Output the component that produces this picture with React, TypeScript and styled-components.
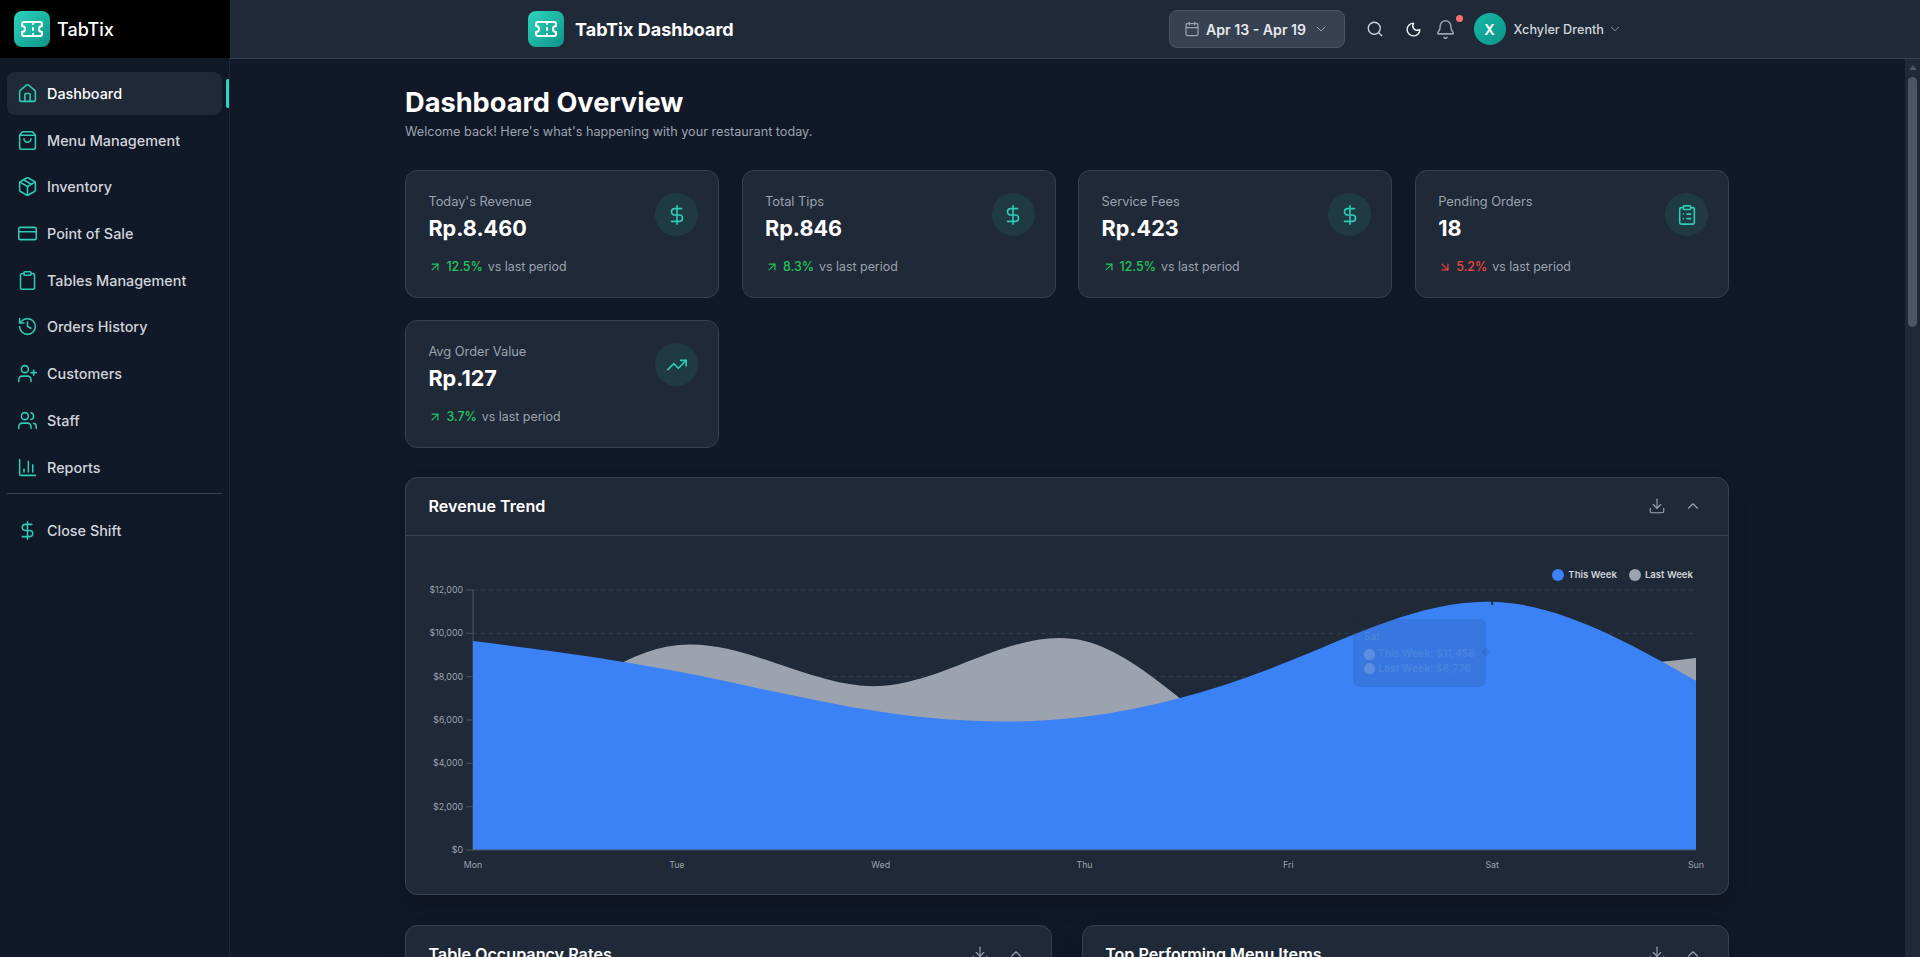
import styled, { createGlobalStyle } from "styled-components"
import {
    ArrowDownRight, ArrowUpRight, Bell, Calendar, ChartColumn, ChevronDown, ChevronUp, Clipboard,
    ClipboardList, CreditCard, DollarSign, Download, History, House, Moon, Package, Search,
    ShoppingBag, Ticket, TrendingUp, UserPlus, Users,
} from "lucide-react"

const GlobalStyle = createGlobalStyle`
    html, body, #root {
        margin: 0;
        height: 100%;
        overflow: hidden;
    }
    body {
        font-family: Inter, "Noto Sans", sans-serif;
        background: #111827;
    }
    * {
        box-sizing: border-box;
    }
`

const Shell = styled.div`
    display: flex;
    height: 100vh;
`
const Sidebar = styled.aside`
    width: 230px;
    flex-shrink: 0;
    display: flex;
    flex-direction: column;
    background: #111827;
    border-right: 1px solid #1f2937;
`
const SideBrand = styled.div`
    height: 58px;
    display: flex;
    align-items: center;
    gap: 7px;
    padding-left: 14px;
    background: #000;
    margin-right: -1px;
`
const LogoBox = styled.div`
    width: 36px;
    height: 36px;
    border-radius: 8px;
    display: flex;
    align-items: center;
    justify-content: center;
    color: #fff;
    background: linear-gradient(135deg, #2dd4bf, #0d9488);
`
const SideBrandName = styled.span`
    font-size: 18px;
    font-weight: 500;
    color: #fff;
`
const Nav = styled.nav`
    display: flex;
    flex-direction: column;
    gap: 3.7px;
    padding: 14px 7px 0;
`
const NavItem = styled.a<{ $active?: boolean }>`
    position: relative;
    height: 43px;
    display: flex;
    align-items: center;
    gap: 9.5px;
    padding-left: 9.5px;
    border-radius: 8px;
    font-size: 14.4px;
    font-weight: 500;
    color: ${(p) => (p.$active ? "#fff" : "#d1d5db")};
    background: ${(p) => (p.$active ? "#1f2937" : "transparent")};
    svg {
        color: #2cccb6;
        flex-shrink: 0;
    }
`
const ActiveMark = styled.span`
    position: absolute;
    right: -7px;
    top: 7px;
    width: 3px;
    height: 29px;
    border-radius: 2px 0 0 2px;
    background: #2dd4bf;
`
const NavDivider = styled.hr`
    width: 100%;
    margin: 1px 0 11px;
    border: 0;
    border-top: 1px solid #374151;
`
const Column = styled.div`
    flex: 1;
    min-width: 0;
    display: flex;
    flex-direction: column;
`
const Header = styled.header`
    height: 59px;
    flex-shrink: 0;
    display: flex;
    align-items: center;
    justify-content: space-between;
    padding: 0 298px;
    background: #1f2937;
    border-bottom: 1px solid #374151;
`
const HeaderBrand = styled.div`
    display: flex;
    align-items: center;
    gap: 11px;
`
const HeaderTitle = styled.h1`
    margin: 0;
    font-size: 18px;
    font-weight: 700;
    color: #fff;
`
const HeaderTools = styled.div`
    display: flex;
    align-items: center;
`
const DateButton = styled.button`
    width: 176px;
    height: 38px;
    display: flex;
    align-items: center;
    gap: 6px;
    padding: 0 0 0 14px;
    font-family: inherit;
    font-size: 14.1px;
    font-weight: 600;
    color: #e5e7eb;
    background: #374151;
    border: 1px solid #4b5563;
    border-radius: 8px;
    svg {
        color: #9ca3af;
    }
    span {
        margin-right: 1px;
    }
`
const IconButton = styled.span<{ $left: number; $color: string }>`
    position: relative;
    display: flex;
    margin-left: ${(p) => p.$left}px;
    color: ${(p) => p.$color};
`
const BellDot = styled.span`
    position: absolute;
    top: -4px;
    right: -7px;
    width: 7px;
    height: 7px;
    border-radius: 50%;
    background: #f87171;
`
const Avatar = styled.div`
    width: 32px;
    height: 32px;
    margin-left: 18px;
    border-radius: 50%;
    display: flex;
    align-items: center;
    justify-content: center;
    font-size: 14.4px;
    font-weight: 600;
    color: #fff;
    background: linear-gradient(135deg, #14b8a6, #0d9488);
`
const UserName = styled.span`
    margin: 0 4px 0 8px;
    font-size: 12.7px;
    font-weight: 500;
    color: #d1d5db;
    white-space: nowrap;
`
const Body = styled.div`
    flex: 1;
    min-height: 0;
    display: flex;
`
const Main = styled.main`
    flex: 1;
    min-width: 0;
    overflow: hidden;
    background: #111827;
`
const ScrollRail = styled.div`
    width: 15px;
    flex-shrink: 0;
    display: flex;
    flex-direction: column;
    align-items: center;
    padding-top: 6px;
    background: #1f2937;
`
const ScrollArrow = styled.span`
    width: 0;
    height: 0;
    border-left: 4.5px solid transparent;
    border-right: 4.5px solid transparent;
    border-bottom: 5px solid #4b5563;
`
const ScrollThumb = styled.span`
    width: 9px;
    height: 250px;
    margin-top: 7px;
    border-radius: 5px;
    background: #4b5563;
`
const Content = styled.div`
    padding: 27px 176px 0 175px;
`
const PageTitle = styled.h2`
    margin: 0;
    font-size: 27.2px;
    line-height: 34px;
    font-weight: 700;
    color: #fff;
`
const PageSub = styled.p`
    margin: 2px 0 0;
    font-size: 12.65px;
    line-height: 20px;
    color: #9ca3af;
`
const StatGrid = styled.section`
    display: grid;
    grid-template-columns: repeat(4, 1fr);
    gap: 22.4px;
    margin-top: 28px;
`
const StatCard = styled.article`
    height: 127.6px;
    padding: 22.4px;
    display: flex;
    justify-content: space-between;
    background: #1f2937;
    border: 1px solid #374151;
    border-radius: 12px;
`
const StatLabel = styled.div`
    font-size: 12.8px;
    line-height: 17px;
    color: #9ca3af;
`
const StatValue = styled.div`
    margin-top: 3px;
    font-size: 21.6px;
    line-height: 30px;
    font-weight: 700;
    color: #fff;
`
const StatTrend = styled.div`
    margin-top: 13.5px;
    display: flex;
    align-items: center;
    font-size: 12.4px;
    line-height: 20px;
    color: #9ca3af;
`
const TrendValue = styled.span<{ $down?: boolean }>`
    display: flex;
    align-items: center;
    gap: 4px;
    margin-right: 5px;
    font-weight: 500;
    color: ${(p) => (p.$down ? "#ef4444" : "#22c55e")};
`
const StatIcon = styled.div`
    width: 43px;
    height: 43px;
    margin-right: -2.4px;
    flex-shrink: 0;
    border-radius: 50%;
    display: flex;
    align-items: center;
    justify-content: center;
    color: #2cccb6;
    background: rgba(45, 212, 191, 0.1);
`
const Panel = styled.section`
    background: #1f2937;
    border: 1px solid #374151;
    border-radius: 12px;
    box-shadow: 0 10px 20px rgba(0, 0, 0, 0.2);
`
const RevenuePanel = styled(Panel)`
    margin-top: 29px;
`
const PanelHead = styled.div`
    height: 58px;
    display: flex;
    align-items: center;
    justify-content: space-between;
    padding: 0 26px 0 22.4px;
    border-bottom: 1px solid #374151;
`
const PanelTitle = styled.h3`
    margin: 0;
    font-size: 16.15px;
    font-weight: 600;
    color: #fff;
`
const PanelTools = styled.div`
    display: flex;
    align-items: center;
    gap: 18px;
    color: #9ca3af;
`
const ChartBody = styled.div`
    position: relative;
    height: 358px;
    svg {
        display: block;
    }
`
const Legend = styled.div`
    position: absolute;
    top: 32px;
    right: 35px;
    display: flex;
    gap: 12px;
    font-size: 9.6px;
    font-weight: 600;
    line-height: 14px;
    color: #d1d5db;
`
const LegendItem = styled.span<{ $color: string }>`
    display: flex;
    align-items: center;
    gap: 4px;
    &::before {
        content: "";
        width: 12px;
        height: 12px;
        border-radius: 50%;
        background: ${(p) => p.$color};
    }
`
const FadedTooltip = styled.div`
    position: absolute;
    left: 947px;
    top: 83px;
    width: 133px;
    height: 68px;
    padding: 10px 11px;
    border-radius: 6px;
    font-size: 10.4px;
    font-weight: 600;
    line-height: 14.5px;
    white-space: nowrap;
    color: rgba(209, 213, 219, 0.14);
    background: rgba(31, 41, 55, 0.12);
    &::after {
        content: "";
        position: absolute;
        right: -3px;
        top: 30px;
        width: 6px;
        height: 6px;
        transform: rotate(45deg);
        background: rgba(31, 41, 55, 0.12);
    }
`
const TooltipDay = styled.div`
    margin-bottom: 4px;
    font-size: 10px;
`
const TooltipRow = styled.div`
    display: flex;
    align-items: center;
    gap: 3px;
    &::before {
        content: "";
        width: 11px;
        height: 11px;
        border-radius: 50%;
        background: rgba(229, 231, 235, 0.22);
    }
`
const LowerGrid = styled.div`
    display: grid;
    grid-template-columns: 1fr 1fr;
    gap: 29.5px;
    margin-top: 30px;
`
const LowerBody = styled.div`
    height: 320px;
`

const nav = [
    { label: "Dashboard", Icon: House, active: true },
    { label: "Menu Management", Icon: ShoppingBag },
    { label: "Inventory", Icon: Package },
    { label: "Point of Sale", Icon: CreditCard },
    { label: "Tables Management", Icon: Clipboard },
    { label: "Orders History", Icon: History },
    { label: "Customers", Icon: UserPlus },
    { label: "Staff", Icon: Users },
    { label: "Reports", Icon: ChartColumn },
]

const stats = [
    { label: "Today's Revenue", value: "Rp.8.460", change: "12.5%", Icon: DollarSign },
    { label: "Total Tips", value: "Rp.846", change: "8.3%", Icon: DollarSign },
    { label: "Service Fees", value: "Rp.423", change: "12.5%", Icon: DollarSign },
    { label: "Pending Orders", value: "18", change: "5.2%", down: true, Icon: ClipboardList },
    { label: "Avg Order Value", value: "Rp.127", change: "3.7%", Icon: TrendingUp },
]

const days = ["Mon", "Tue", "Wed", "Thu", "Fri", "Sat", "Sun"]
const thisWeek = [9646, 8250, 6380, 6150, 8700, 11458, 7815]
const lastWeek = [3000, 9450, 7570, 9650, 3800, 6776, 8860]
const yTicks = [0, 2000, 4000, 6000, 8000, 10000, 12000]

const plotLeft = 67
const plotRight = 1290
const plotTop = 54
const plotBottom = 314
const xAt = (i: number) => plotLeft + (i * (plotRight - plotLeft)) / 6
const yAt = (v: number) => plotBottom - (v * (plotBottom - plotTop)) / 12000

// same maths as a natural cubic spline in d3-shape
const controls = (x: number[]) => {
    const n = x.length - 1
    const a: number[] = [0]
    const b: number[] = [2]
    const r: number[] = [x[0] + 2 * x[1]]
    for (let i = 1; i < n - 1; i++) {
        a[i] = 1
        b[i] = 4
        r[i] = 4 * x[i] + 2 * x[i + 1]
    }
    a[n - 1] = 2
    b[n - 1] = 7
    r[n - 1] = 8 * x[n - 1] + x[n]
    for (let i = 1; i < n; i++) {
        const m = a[i] / b[i - 1]
        b[i] -= m
        r[i] -= m * r[i - 1]
    }
    a[n - 1] = r[n - 1] / b[n - 1]
    for (let i = n - 2; i >= 0; i--) a[i] = (r[i] - a[i + 1]) / b[i]
    b[n - 1] = (x[n] + a[n - 1]) / 2
    for (let i = 0; i < n - 1; i++) b[i] = 2 * x[i + 1] - a[i + 1]
    return [a, b]
}

const areaPath = (values: number[]) => {
    const xs = values.map((_, i) => xAt(i))
    const ys = values.map(yAt)
    const [ax, bx] = controls(xs)
    const [ay, by] = controls(ys)
    let d = `M${xs[0]},${plotBottom}L${xs[0]},${ys[0]}`
    for (let i = 0; i < xs.length - 1; i++) {
        d += `C${ax[i]},${ay[i]},${bx[i]},${by[i]},${xs[i + 1]},${ys[i + 1]}`
    }
    return d + `L${xs[xs.length - 1]},${plotBottom}Z`
}

const RevenueChart = () => (
    <svg width="1322" height="358" viewBox="0 0 1322 358">
        {yTicks.map((t) => (
            <g key={t}>
                <line x1={plotLeft - 7} x2={plotLeft} y1={yAt(t)} y2={yAt(t)} stroke="#4b5563" />
                {t > 0 && (
                    <line x1={plotLeft} x2={plotRight} y1={yAt(t)} y2={yAt(t)} stroke="#374151" strokeDasharray="4 4" />
                )}
                <text x={plotLeft - 10} y={yAt(t) + 3} textAnchor="end" fontSize="8.8" fill="#9ca3af">
                    ${t.toLocaleString("en-US")}
                </text>
            </g>
        ))}
        <line x1={plotLeft} x2={plotLeft} y1={plotTop} y2={plotBottom} stroke="#4b5563" />
        <path d={areaPath(lastWeek)} fill="#9ca3af" />
        <path d={areaPath(thisWeek)} fill="#3b82f6" />
        <line x1={plotLeft} x2={plotRight} y1={plotBottom} y2={plotBottom} stroke="#4b5563" />
        <line x1={xAt(5)} x2={xAt(5)} y1={yAt(11458)} y2={yAt(11458) + 3} stroke="#1f2937" strokeWidth="2" />
        {days.map((d, i) => (
            <text key={d} x={xAt(i)} y={plotBottom + 18} textAnchor="middle" fontSize="8.8" fill="#9ca3af">
                {d}
            </text>
        ))}
    </svg>
)

const App = () => (
    <Shell>
        <GlobalStyle />
        <Sidebar>
            <SideBrand>
                <LogoBox><Ticket size={24} /></LogoBox>
                <SideBrandName>TabTix</SideBrandName>
            </SideBrand>
            <Nav>
                {nav.map(({ label, Icon, active }) => (
                    <NavItem key={label} $active={active}>
                        <Icon size={21} strokeWidth={1.75} />
                        {label}
                        {active && <ActiveMark />}
                    </NavItem>
                ))}
                <NavDivider />
                <NavItem>
                    <DollarSign size={21} strokeWidth={1.75} />
                    Close Shift
                </NavItem>
            </Nav>
        </Sidebar>
        <Column>
            <Header>
                <HeaderBrand>
                    <LogoBox><Ticket size={24} /></LogoBox>
                    <HeaderTitle>TabTix Dashboard</HeaderTitle>
                </HeaderBrand>
                <HeaderTools>
                    <DateButton>
                        <Calendar size={16} strokeWidth={1.75} />
                        <span>Apr 13 - Apr 19</span>
                        <ChevronDown size={16} strokeWidth={1.5} />
                    </DateButton>
                    <IconButton $left={21} $color="#d1d5db"><Search size={18} strokeWidth={1.75} /></IconButton>
                    <IconButton $left={21} $color="#f3f4f6"><Moon size={17} /></IconButton>
                    <IconButton $left={12.5} $color="#9ca3af">
                        <Bell size={21} strokeWidth={1.75} />
                        <BellDot />
                    </IconButton>
                    <Avatar>X</Avatar>
                    <UserName>Xchyler Drenth</UserName>
                    <IconButton $left={0} $color="#9ca3af"><ChevronDown size={14} strokeWidth={1.5} /></IconButton>
                </HeaderTools>
            </Header>
            <Body>
                <Main>
                    <Content>
                        <PageTitle>Dashboard Overview</PageTitle>
                        <PageSub>Welcome back! Here's what's happening with your restaurant today.</PageSub>
                        <StatGrid>
                            {stats.map(({ label, value, change, down, Icon }) => (
                                <StatCard key={label}>
                                    <div>
                                        <StatLabel>{label}</StatLabel>
                                        <StatValue>{value}</StatValue>
                                        <StatTrend>
                                            <TrendValue $down={down}>
                                                {down ? <ArrowDownRight size={14} /> : <ArrowUpRight size={14} />}
                                                {change}
                                            </TrendValue>
                                            vs last period
                                        </StatTrend>
                                    </div>
                                    <StatIcon><Icon size={22} strokeWidth={1.75} /></StatIcon>
                                </StatCard>
                            ))}
                        </StatGrid>
                        <RevenuePanel>
                            <PanelHead>
                                <PanelTitle>Revenue Trend</PanelTitle>
                                <PanelTools>
                                    <Download size={18} strokeWidth={1.5} />
                                    <ChevronUp size={18} strokeWidth={1.5} />
                                </PanelTools>
                            </PanelHead>
                            <ChartBody>
                                <RevenueChart />
                                <Legend>
                                    <LegendItem $color="#3b82f6">This Week</LegendItem>
                                    <LegendItem $color="#9ca3af">Last Week</LegendItem>
                                </Legend>
                                <FadedTooltip>
                                    <TooltipDay>Sat</TooltipDay>
                                    <TooltipRow>This Week: $11,458</TooltipRow>
                                    <TooltipRow>Last Week: $6,776</TooltipRow>
                                </FadedTooltip>
                            </ChartBody>
                        </RevenuePanel>
                        <LowerGrid>
                            {["Table Occupancy Rates", "Top Performing Menu Items"].map((title) => (
                                <Panel key={title}>
                                    <PanelHead>
                                        <PanelTitle>{title}</PanelTitle>
                                        <PanelTools>
                                            <Download size={18} strokeWidth={1.5} />
                                            <ChevronUp size={18} strokeWidth={1.5} />
                                        </PanelTools>
                                    </PanelHead>
                                    <LowerBody />
                                </Panel>
                            ))}
                        </LowerGrid>
                    </Content>
                </Main>
                <ScrollRail>
                    <ScrollArrow />
                    <ScrollThumb />
                </ScrollRail>
            </Body>
        </Column>
    </Shell>
)

export default App
